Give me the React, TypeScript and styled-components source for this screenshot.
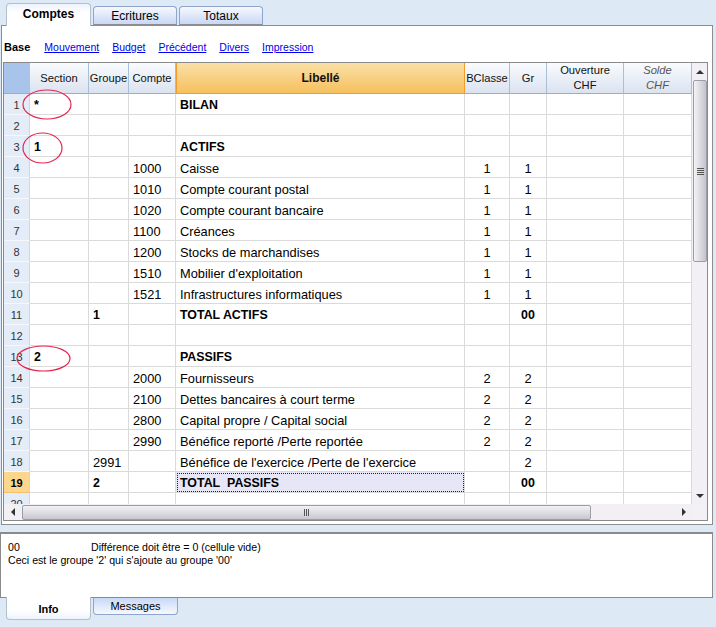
import React from 'react';
import styled, { createGlobalStyle, css } from 'styled-components';

type Row = {
  sec?: string;
  grp?: string;
  cpt?: string;
  lib?: string;
  bc?: string;
  gr?: string;
  bold?: boolean;
};

const ROWS: Row[] = [
  { sec: '*', lib: 'BILAN', bold: true },
  {},
  { sec: '1', lib: 'ACTIFS', bold: true },
  { cpt: '1000', lib: 'Caisse', bc: '1', gr: '1' },
  { cpt: '1010', lib: 'Compte courant postal', bc: '1', gr: '1' },
  { cpt: '1020', lib: 'Compte courant bancaire', bc: '1', gr: '1' },
  { cpt: '1100', lib: 'Créances', bc: '1', gr: '1' },
  { cpt: '1200', lib: 'Stocks de marchandises', bc: '1', gr: '1' },
  { cpt: '1510', lib: "Mobilier d'exploitation", bc: '1', gr: '1' },
  { cpt: '1521', lib: 'Infrastructures informatiques', bc: '1', gr: '1' },
  { grp: '1', lib: 'TOTAL ACTIFS', gr: '00', bold: true },
  {},
  { sec: '2', lib: 'PASSIFS', bold: true },
  { cpt: '2000', lib: 'Fournisseurs', bc: '2', gr: '2' },
  { cpt: '2100', lib: 'Dettes bancaires à court terme', bc: '2', gr: '2' },
  { cpt: '2800', lib: 'Capital propre / Capital social', bc: '2', gr: '2' },
  { cpt: '2990', lib: 'Bénéfice reporté /Perte reportée', bc: '2', gr: '2' },
  { grp: '2991', lib: "Bénéfice de l'exercice /Perte de l'exercice", gr: '2' },
  { grp: '2', lib: 'TOTAL\u00a0\u00a0PASSIFS', gr: '00', bold: true },
  {},
];

const CURRENT_ROW = 19;

const GlobalStyle = createGlobalStyle`
  html, body {
    margin: 0;
    padding: 0;
    background: #dde9f5;
  }
  body {
    font-family: "Liberation Sans", Arial, sans-serif;
    color: #000;
  }
`;

const App: React.FC = () => {
  return (
    <Page>
      <GlobalStyle />
      <TopTabs>
        <Tab $active>Comptes</Tab>
        <Tab>Ecritures</Tab>
        <Tab>Totaux</Tab>
      </TopTabs>

      <Panel>
        <SubTabs>
          <SubTabActive>Base</SubTabActive>
          <SubTabLink href="#">Mouvement</SubTabLink>
          <SubTabLink href="#">Budget</SubTabLink>
          <SubTabLink href="#">Précédent</SubTabLink>
          <SubTabLink href="#">Divers</SubTabLink>
          <SubTabLink href="#">Impression</SubTabLink>
        </SubTabs>

        <GridFrame>
          <GridTop>
            <Sheet>
              <Head $variant="corner" />
              <Head>Section</Head>
              <Head>Groupe</Head>
              <Head>Compte</Head>
              <Head $variant="main">Libellé</Head>
              <Head>BClasse</Head>
              <Head>Gr</Head>
              <Head>
                <span>Ouverture</span>
                <span>CHF</span>
              </Head>
              <Head $italic>
                <span>Solde</span>
                <span>CHF</span>
              </Head>

              {ROWS.map((r, i) => {
                const n = i + 1;
                const current = n === CURRENT_ROW;
                return (
                  <React.Fragment key={n}>
                    <RowNum $current={current}>{n}</RowNum>
                    <Cell $bold={r.bold}>{r.sec}</Cell>
                    <Cell $bold={r.bold}>{r.grp}</Cell>
                    <Cell>{r.cpt}</Cell>
                    <Cell $bold={r.bold} $selected={current}>
                      {r.lib}
                    </Cell>
                    <Cell $align="center">{r.bc}</Cell>
                    <Cell $align="center" $bold={r.bold}>
                      {r.gr}
                    </Cell>
                    <Cell />
                    <Cell />
                  </React.Fragment>
                );
              })}
            </Sheet>

            <VScroll>
              <ScrollButton>
                <Arrow $dir="up" />
              </ScrollButton>
              <VThumb>
                <Grip>
                  <GripLine />
                  <GripLine />
                  <GripLine />
                  <GripLine />
                </Grip>
              </VThumb>
              <Track />
              <ScrollButton>
                <Arrow $dir="down" />
              </ScrollButton>
            </VScroll>
          </GridTop>

          <HScroll>
            <ScrollButton $horizontal>
              <Arrow $dir="left" />
            </ScrollButton>
            <HThumb>
              <Grip $horizontal>
                <GripLine $horizontal />
                <GripLine $horizontal />
                <GripLine $horizontal />
              </Grip>
            </HThumb>
            <Track />
            <ScrollButton $horizontal>
              <Arrow $dir="right" />
            </ScrollButton>
            <Corner />
          </HScroll>
        </GridFrame>
      </Panel>

      <InfoPanel>
        <InfoLine>
          <InfoCode>00</InfoCode>
          Différence doit être = 0 (cellule vide)
        </InfoLine>
        <InfoLine>Ceci est le groupe '2' qui s'ajoute au groupe '00'</InfoLine>
      </InfoPanel>

      <BottomTabs>
        <BottomTab $active>Info</BottomTab>
        <BottomTab>Messages</BottomTab>
      </BottomTabs>

      <Marks viewBox="0 0 716 627" width={716} height={627}>
        <ellipse cx="47" cy="104.5" rx="24" ry="14.5" />
        <ellipse cx="42.5" cy="148" rx="19.5" ry="15" />
        <ellipse cx="43.5" cy="358.5" rx="26.5" ry="12.5" />
      </Marks>
    </Page>
  );
};

export default App;

const Page = styled.div`
  position: relative;
  width: 716px;
  height: 627px;
  overflow: hidden;
  background: #dde9f5;
`;

const TopTabs = styled.div`
  display: flex;
  align-items: flex-end;
  gap: 2px;
  height: 25px;
  padding-left: 6px;
`;

const Tab = styled.div<{ $active?: boolean }>`
  position: relative;
  box-sizing: border-box;
  width: ${({ $active }) => ($active ? '85px' : '84px')};
  height: ${({ $active }) => ($active ? '23px' : '19px')};
  margin-bottom: ${({ $active }) => ($active ? '-1px' : '0')};
  display: flex;
  align-items: center;
  justify-content: center;
  font-size: 12px;
  font-weight: ${({ $active }) => ($active ? 700 : 400)};
  padding-bottom: ${({ $active }) => ($active ? '2px' : '0')};
  border: 1px solid ${({ $active }) => ($active ? '#b3bfd0' : '#8fa5cc')};
  border-bottom: ${({ $active }) => ($active ? 'none' : '1px solid #8d8d8d')};
  border-radius: 4px 4px 0 0;
  background: ${({ $active }) =>
    $active ? 'linear-gradient(#eef3fb, #ffffff 40%)' : 'linear-gradient(#f6f8fe, #c9d8f6)'};
  z-index: ${({ $active }) => ($active ? 1 : 0)};
`;

const Panel = styled.div`
  box-sizing: border-box;
  width: 712px;
  height: 500px;
  margin-left: 1px;
  border: 1px solid #8d8d8d;
  background: #fff;
  display: flex;
  flex-direction: column;
`;

const SubTabs = styled.div`
  height: 36px;
  display: flex;
  align-items: center;
  gap: 13px;
  padding: 6px 0 0 2px;
  box-sizing: border-box;
  font-size: 10.5px;
`;

const SubTabActive = styled.span`
  font-weight: 700;
  font-size: 11px;
  margin-right: 1px;
`;

const SubTabLink = styled.a`
  color: #0000ee;
  text-decoration: underline;
`;

const GridFrame = styled.div`
  width: 703px;
  margin-left: 1px;
  border: 1px solid #8a8a8a;
  display: flex;
  flex-direction: column;
`;

const GridTop = styled.div`
  display: flex;
`;

const Sheet = styled.div`
  display: grid;
  grid-template-columns: 26px 59px 40px 47px 289px 45px 37px 77px 68px;
  grid-template-rows: 31px;
  grid-auto-rows: 21px;
  width: 688px;
  height: 441px;
  overflow: hidden;
`;

const Head = styled.div<{ $variant?: 'corner' | 'main'; $italic?: boolean }>`
  box-sizing: border-box;
  display: flex;
  flex-direction: column;
  align-items: center;
  justify-content: center;
  font-size: 11.2px;
  line-height: 15px;
  color: #111;
  white-space: nowrap;
  background: linear-gradient(#f9fbfe, #dbe3f0);
  border-right: 1px solid #a9bfd8;
  border-bottom: 1px solid #93afd2;
  ${({ $italic }) =>
    $italic &&
    css`
      font-style: italic;
      color: #555;
    `}
  ${({ $variant }) =>
    $variant === 'corner' &&
    css`
      background: #a8c4ea;
      border-right: 1px solid #a8c4ea;
    `}
  ${({ $variant }) =>
    $variant === 'main' &&
    css`
      font-weight: 700;
      font-size: 12px;
      background: linear-gradient(#fae0a6, #f6c05e);
      border-left: 1px solid #f29c30;
      border-right: 1px solid #f29c30;
      border-bottom: 1px solid #f29c30;
    `}
`;

const RowNum = styled.div<{ $current?: boolean }>`
  box-sizing: border-box;
  display: flex;
  align-items: center;
  justify-content: center;
  padding-top: 2px;
  font-size: 11px;
  font-weight: ${({ $current }) => ($current ? 700 : 400)};
  color: ${({ $current }) => ($current ? '#000' : '#333')};
  background: ${({ $current }) => ($current ? '#fcd68c' : '#e3ecf7')};
  border-bottom: 1px solid ${({ $current }) => ($current ? '#f2c070' : '#f4f7fb')};
  border-right: 1px solid #cad7e8;
`;

const Cell = styled.div<{ $align?: 'left' | 'center'; $bold?: boolean; $selected?: boolean }>`
  box-sizing: border-box;
  display: flex;
  align-items: center;
  justify-content: ${({ $align }) => ($align === 'center' ? 'center' : 'flex-start')};
  padding: 2px 4px 0;
  font-size: ${({ $bold }) => ($bold ? '12.4px' : '12.8px')};
  font-weight: ${({ $bold }) => ($bold ? 700 : 400)};
  white-space: nowrap;
  overflow: hidden;
  border-right: 1px solid #dadada;
  border-bottom: 1px solid #dadada;
  ${({ $selected }) =>
    $selected &&
    css`
      background: #e6e6f7;
      outline: 1px dotted #222;
      outline-offset: -2px;
    `}
`;

const VScroll = styled.div`
  width: 15px;
  height: 441px;
  display: flex;
  flex-direction: column;
  background: #f2f0f5;
`;

const ScrollButton = styled.div<{ $horizontal?: boolean }>`
  flex: none;
  width: ${({ $horizontal }) => ($horizontal ? '17px' : '15px')};
  height: ${({ $horizontal }) => ($horizontal ? '16px' : '17px')};
  display: flex;
  align-items: center;
  justify-content: center;
`;

const Arrow = styled.span<{ $dir: 'up' | 'down' | 'left' | 'right' }>`
  width: 0;
  height: 0;
  ${({ $dir }) =>
    $dir === 'up'
      ? css`
          border-left: 4px solid transparent;
          border-right: 4px solid transparent;
          border-bottom: 4px solid #333;
        `
      : $dir === 'down'
      ? css`
          border-left: 4px solid transparent;
          border-right: 4px solid transparent;
          border-top: 4px solid #333;
        `
      : $dir === 'left'
      ? css`
          border-top: 4px solid transparent;
          border-bottom: 4px solid transparent;
          border-right: 4px solid #333;
        `
      : css`
          border-top: 4px solid transparent;
          border-bottom: 4px solid transparent;
          border-left: 4px solid #333;
        `}
`;

const Track = styled.div`
  flex: 1;
`;

const VThumb = styled.div`
  box-sizing: border-box;
  flex: none;
  height: 182px;
  margin-left: 1px;
  border: 1px solid #9d9ca8;
  border-radius: 2px;
  background: linear-gradient(90deg, #f3f3f6, #c4c3cd);
  display: flex;
  align-items: center;
  justify-content: center;
`;

const HScroll = styled.div`
  height: 16px;
  display: flex;
  background: #f2f0f5;
`;

const HThumb = styled.div`
  box-sizing: border-box;
  flex: none;
  width: 569px;
  margin: 1px 0 0 1px;
  border: 1px solid #9d9ca8;
  border-radius: 2px;
  background: linear-gradient(#f3f3f6, #c8c7d1);
  display: flex;
  align-items: center;
  justify-content: center;
`;

const Grip = styled.div<{ $horizontal?: boolean }>`
  display: flex;
  flex-direction: ${({ $horizontal }) => ($horizontal ? 'row' : 'column')};
  gap: 1px;
`;

const GripLine = styled.span<{ $horizontal?: boolean }>`
  display: block;
  width: ${({ $horizontal }) => ($horizontal ? '1px' : '7px')};
  height: ${({ $horizontal }) => ($horizontal ? '7px' : '1px')};
  background: #555;
`;

const Corner = styled.div`
  width: 15px;
  background: #f3f0f6;
`;

const InfoPanel = styled.div`
  box-sizing: border-box;
  width: 713px;
  height: 66px;
  margin-top: 7px;
  padding: 7px 0 0 7px;
  border: 1px solid #8a8a8a;
  border-top-width: 2px;
  background: #fff;
  font-size: 10.6px;
  line-height: 13px;
`;

const InfoLine = styled.div`
  display: flex;
  white-space: pre;
`;

const InfoCode = styled.span`
  width: 83px;
`;

const BottomTabs = styled.div`
  display: flex;
  align-items: flex-start;
  gap: 2px;
  padding-left: 6px;
`;

const BottomTab = styled.div<{ $active?: boolean }>`
  position: relative;
  box-sizing: border-box;
  width: 85px;
  height: ${({ $active }) => ($active ? '23px' : '18px')};
  margin-top: -1px;
  display: flex;
  align-items: center;
  justify-content: center;
  font-size: 11px;
  font-weight: ${({ $active }) => ($active ? 700 : 400)};
  padding-top: ${({ $active }) => ($active ? '2px' : '0')};
  border: 1px solid ${({ $active }) => ($active ? '#b3bfd0' : '#8fa5cc')};
  border-top: ${({ $active }) => ($active ? 'none' : '1px solid #8a8a8a')};
  border-radius: 0 0 4px 4px;
  background: ${({ $active }) =>
    $active ? 'linear-gradient(#ffffff 60%, #eef3fb)' : 'linear-gradient(#c9d8f6, #f6f8fe)'};
  z-index: ${({ $active }) => ($active ? 1 : 0)};
`;

const Marks = styled.svg`
  position: absolute;
  top: 0;
  left: 0;
  pointer-events: none;
  fill: none;
  stroke: #e4264f;
  stroke-width: 1.2;
`;
